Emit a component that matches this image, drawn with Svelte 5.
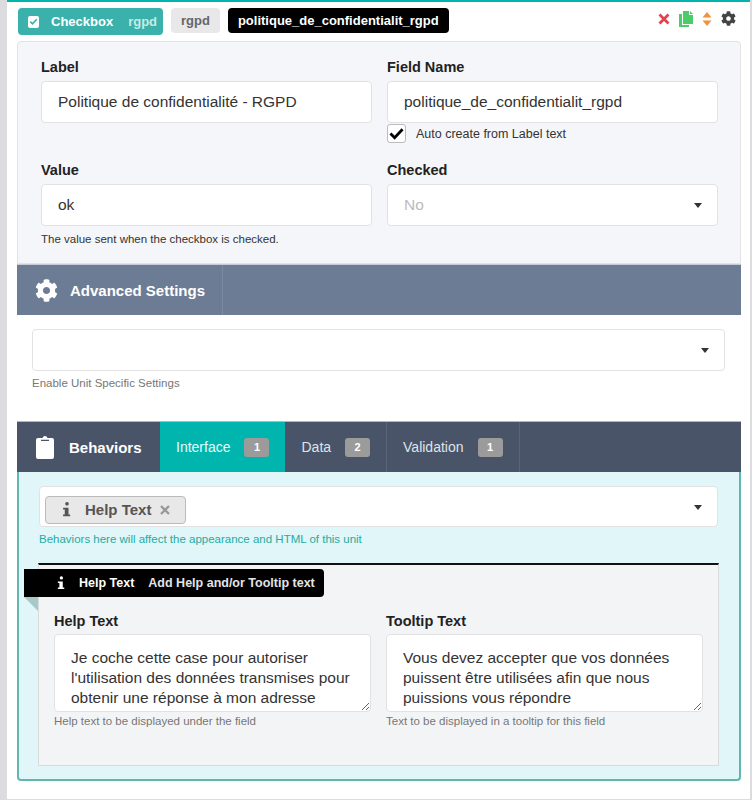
<script>
  const gear = 'M487.4 315.7l-42.6-24.6c4.3-23.2 4.3-47 0-70.2l42.6-24.6c4.9-2.8 7.1-8.6 5.5-14-11.1-35.6-30-67.8-54.7-94.6-3.8-4.1-10-5.1-14.8-2.3L380.8 110c-17.9-15.4-38.5-27.3-60.8-35.1V25.8c0-5.6-3.9-10.5-9.4-11.7-36.7-8.2-74.3-7.8-109.2 0-5.5 1.2-9.4 6.1-9.4 11.7V75c-22.2 7.9-42.8 19.8-60.8 35.1L88.7 85.5c-4.9-2.8-11-1.9-14.8 2.3-24.7 26.7-43.6 58.9-54.7 94.6-1.7 5.4.6 11.2 5.5 14L67.3 221c-4.3 23.2-4.3 47 0 70.2l-42.6 24.6c-4.9 2.8-7.1 8.6-5.5 14 11.1 35.6 30 67.8 54.7 94.6 3.8 4.1 10 5.1 14.8 2.3l42.6-24.6c17.9 15.4 38.5 27.3 60.8 35.1v49.2c0 5.6 3.9 10.5 9.4 11.7 36.7 8.2 74.3 7.8 109.2 0 5.5-1.2 9.4-6.1 9.4-11.7v-49.2c22.2-7.9 42.8-19.8 60.8-35.1l42.6 24.6c4.9 2.8 11 1.9 14.8-2.3 24.7-26.7 43.6-58.9 54.7-94.6 1.5-5.5-.7-11.3-5.6-14.1zM256 336c-44.1 0-80-35.9-80-80s35.9-80 80-80 80 35.9 80 80-35.9 80-80 80z';
  const info = 'M5 2.2a2.2 2.2 0 1 1 4.4 0a2.2 2.2 0 1 1-4.4 0zM2.5 7h6.5v8h2v2H2.500v-2h2V9h-2z';

  const tabs = [
    { name: 'Interface', count: 1, active: true },
    { name: 'Data', count: 2 },
    { name: 'Validation', count: 1 },
  ];

  const helpText = "Je coche cette case pour autoriser l'utilisation des données transmises pour obtenir une réponse à mon adresse";
  const tooltipText = 'Vous devez accepter que vos données puissent être utilisées afin que nous puissions vous répondre';
</script>

<div class="unit">
  <div class="topbar">
    <div class="tags">
      <span class="tag type">
        <span class="tick">
          <svg viewBox="0 0 12 12" width="11" height="11"><path d="M2.500 6.200l2.400 2.400 4.600-5" fill="none" stroke="#3ab1aa" stroke-width="1.800" /></svg>
        </span>
        <b>Checkbox</b>
        <b class="soft">rgpd</b>
      </span>
      <span class="tag grey">rgpd</span>
      <span class="tag black">politique_de_confidentialit_rgpd</span>
    </div>
    <div class="actions">
      <svg viewBox="0 0 12 12" width="12" height="12"><path d="M1.500 1.500l9 9M10.500 1.500l-9 9" stroke="#e0424f" stroke-width="2.800" /></svg>
      <svg viewBox="0 0 14 16" width="14" height="16"><path d="M4 0h6v4h4v9H4z M11 0l3 3h-3z" fill="#4ccb6b" /><path d="M0 3h3v11h7v2H0z" fill="#4ccb6b" /></svg>
      <svg viewBox="0 0 10 14" width="10" height="14"><path d="M5 0l4.500 5.500H.5zM5 14L.5 8.500h9z" fill="#f0923b" /></svg>
      <svg viewBox="0 0 512 512" width="15" height="15"><path d={gear} fill="#444" /></svg>
    </div>
  </div>

  <div class="panel">
    <div class="field">
      <label for="label">Label</label>
      <input id="label" value="Politique de confidentialité - RGPD" />
    </div>
    <div class="field">
      <label for="fname">Field Name</label>
      <input id="fname" value="politique_de_confidentialit_rgpd" />
      <div class="auto">
        <span class="box">
          <svg viewBox="0 0 16 14" width="15" height="13"><path d="M1.500 7l4.500 4.500L14.500 2.500" fill="none" stroke="#000" stroke-width="3" /></svg>
        </span>
        Auto create from Label text
      </div>
    </div>
    <div class="field">
      <label for="val">Value</label>
      <input id="val" value="ok" />
      <p class="hint dark">The value sent when the checkbox is checked.</p>
    </div>
    <div class="field">
      <span class="lbl">Checked</span>
      <div class="select muted">No<i class="caret"></i></div>
    </div>
  </div>

  <div class="bar advanced">
    <div class="bar-title">
      <svg viewBox="0 0 512 512" width="23" height="23"><path d={gear} fill="#fff" /></svg>
      <b>Advanced Settings</b>
    </div>
  </div>
  <div class="adv-body">
    <div class="select"><i class="caret"></i></div>
    <p class="hint">Enable Unit Specific Settings</p>
  </div>

  <div class="bar behaviors">
    <div class="bar-title beh">
      <svg viewBox="0 0 18 24" width="18" height="24">
        <path fill-rule="evenodd" fill="#fff" d="M2 3h4.500a2.600 2.600 0 0 1 5 0H16a2 2 0 0 1 2 2v17a2 2 0 0 1-2 2H2a2 2 0 0 1-2-2V5a2 2 0 0 1 2-2zM5 6h8V4.800H5z" />
      </svg>
      <b>Behaviors</b>
    </div>
    {#each tabs as tab}
      <div class="tab" class:active={tab.active}>
        {tab.name}
        <span class="count">{tab.count}</span>
      </div>
    {/each}
  </div>

  <div class="beh-body">
    <div class="select chooser">
      <span class="chip">
        <svg viewBox="0 0 12 18" width="10" height="15"><path d={info} fill="#555" /></svg>
        <b>Help Text</b>
        <svg class="chip-x" viewBox="0 0 10 10" width="10" height="10"><path d="M1 1l8 8M9 1l-8 8" stroke="#999" stroke-width="2.400" /></svg>
      </span>
      <i class="caret"></i>
    </div>
    <p class="hint teal">Behaviors here will affect the appearance and HTML of this unit</p>

    <div class="help-card">
      <div class="ribbon">
        <svg viewBox="0 0 12 18" width="9" height="14"><path d={info} fill="#fff" /></svg>
        <b>Help Text</b>
        <b class="soft">Add Help and/or Tooltip text</b>
      </div>
      <div class="ribbon-fold"></div>
      <div class="field">
        <label for="help">Help Text</label>
        <textarea id="help" value={helpText}></textarea>
        <p class="hint">Help text to be displayed under the field</p>
      </div>
      <div class="field">
        <label for="tip">Tooltip Text</label>
        <textarea id="tip" value={tooltipText}></textarea>
        <p class="hint">Text to be displayed in a tooltip for this field</p>
      </div>
    </div>
  </div>
</div>

<style>
  :global(body) {
    background: #dcdcde;
    font-family: "Liberation Sans", Arial, sans-serif;
  }

  .unit {
    box-sizing: border-box;
    width: 743px;
    height: 799px;
    margin-left: 7px;
    padding: 0 9px 0 10px;
    background: #fff;
    border-top: 2px solid #00b5ad;
    color: #333;
  }

  .topbar {
    display: flex;
    justify-content: space-between;
    align-items: flex-start;
    padding: 6px 0 0 1px;
    height: 33px;
  }

  .tags {
    display: flex;
    gap: 8px;
    align-items: flex-start;
  }

  .tag {
    display: flex;
    align-items: center;
    height: 25px;
    padding: 0 10px;
    border-radius: 4px;
    font-size: 13px;
    font-weight: bold;
  }

  .type {
    height: 27px;
    width: 145px;
    box-sizing: border-box;
    background: #3ab1aa;
    color: #fff;
  }

  .type .tick {
    display: flex;
    align-items: center;
    justify-content: center;
    width: 12px;
    height: 12px;
    margin-right: 12px;
    background: #fff;
    border-radius: 2px;
  }

  .type .soft {
    margin-left: 15px;
    color: #c4ece9;
  }

  .grey {
    background: #e8e8e8;
    color: #666;
  }

  .black {
    background: #000;
    color: #fff;
  }

  .actions {
    display: flex;
    align-items: center;
    gap: 9px;
    height: 21px;
    padding-right: 5px;
    margin-top: 0;
  }

  .panel {
    display: grid;
    grid-template-columns: 331px 331px;
    column-gap: 15px;
    grid-template-rows: 103px 1fr;
    box-sizing: border-box;
    height: 223px;
    padding: 16px 23px 0;
    background: #f5f6f9;
    border: 1px solid #e3e3e6;
    border-radius: 4px 4px 0 0;
  }

  .field {
    min-width: 0;
  }

  label,
  .lbl {
    display: block;
    height: 23px;
    font-size: 14.500px;
    line-height: 18px;
    font-weight: bold;
    color: #222;
  }

  input,
  .select {
    display: block;
    box-sizing: border-box;
    width: 100%;
    height: 42px;
    padding: 0 16px;
    background: #fff;
    border: 1px solid #e2e2e5;
    border-radius: 4px;
    font: 15.500px/40px "Liberation Sans", Arial, sans-serif;
    color: #333;
    position: relative;
  }

  .muted {
    color: #bbb;
  }

  .caret {
    position: absolute;
    right: 15px;
    top: 18px;
    border: 4.500px solid transparent;
    border-top: 5px solid #333;
    border-bottom: 0;
  }

  .auto {
    display: flex;
    align-items: center;
    gap: 10px;
    margin-top: 1px;
    font-size: 12.500px;
    color: #333;
  }

  .box {
    display: flex;
    align-items: center;
    justify-content: center;
    box-sizing: border-box;
    width: 19px;
    height: 19px;
    background: #fff;
    border: 1px solid #bbb;
    border-radius: 3px;
  }

  .hint {
    margin: 0;
    font-size: 11.500px;
    line-height: 14px;
    color: #777;
  }

  .dark {
    margin-top: 6px;
    color: #333;
  }

  .teal {
    margin-top: 5px;
    color: #27aba3;
  }

  .bar {
    display: flex;
    height: 50px;
    color: #fff;
  }

  .bar-title {
    display: flex;
    align-items: center;
    gap: 12px;
    box-sizing: border-box;
    padding-left: 18px;
    font-size: 15px;
  }

  .advanced {
    background: #6d7c95;
    border-top: 1px solid #c7ccd4;
    box-sizing: content-box;
  }

  .advanced .bar-title {
    width: 206px;
    border-right: 1px solid #7c8aa1;
  }

  .adv-body {
    box-sizing: border-box;
    height: 106px;
    padding: 14px 16px 0 15px;
  }

  .adv-body .hint {
    margin-top: 5px;
  }

  .behaviors {
    height: 51px;
    background: #4a5468;
    border-top: 1px solid #b4b8c0;
    box-sizing: border-box;
  }

  .beh {
    width: 143px;
    gap: 15px;
    padding-left: 19px;
  }

  .tab {
    display: flex;
    align-items: center;
    gap: 14px;
    padding: 0 16px;
    font-size: 14px;
    color: #dfe3ea;
    border-right: 1px solid #59637a;
  }

  .tab.active {
    background: #00b5ad;
    border-right: 0;
    color: #e8fbfa;
  }

  .count {
    display: flex;
    align-items: center;
    justify-content: center;
    width: 25px;
    height: 19px;
    border-radius: 3px;
    background: #9b9b9b;
    color: #fff;
    font-size: 11px;
    font-weight: bold;
  }

  .beh-body {
    box-sizing: border-box;
    height: 309px;
    padding: 14px 20px 0 20px;
    background: #e0f6f8;
    border: 2px solid #62b6b2;
    border-top: 0;
    border-radius: 0 0 4px 4px;
  }

  .chooser {
    height: 41px;
    padding: 5px;
    width: 679px;
  }

  .chip {
    display: inline-flex;
    align-items: center;
    box-sizing: border-box;
    width: 141px;
    height: 28px;
    padding-left: 15px;
    background: #e8e8e8;
    border: 1px solid #bbb;
    border-radius: 4px;
    font-size: 15px;
    line-height: 1;
    color: #555;
  }

  .chip b {
    margin-left: 14px;
  }

  .chip-x {
    margin-left: 9px;
  }

  .help-card {
    position: relative;
    display: grid;
    grid-template-columns: 317px 317px;
    column-gap: 15px;
    box-sizing: border-box;
    width: 681px;
    height: 203px;
    margin: 17px 0 0 -1px;
    padding: 47px 15px 0;
    background: #f3f4f6;
    border: 1px solid #d8dadc;
    border-top: 2px solid #111;
  }

  .help-card label {
    height: 22px;
  }

  .ribbon {
    position: absolute;
    left: -15px;
    top: 4px;
    display: flex;
    align-items: center;
    box-sizing: border-box;
    width: 300px;
    height: 28px;
    padding-left: 32px;
    background: #000;
    border-radius: 0 4px 4px 0;
    color: #fff;
    font-size: 12.500px;
    gap: 14px;
  }

  .ribbon .soft {
    color: #e4e4e4;
    margin-left: 0;
  }

  .ribbon-fold {
    position: absolute;
    left: -15px;
    top: 32px;
    border-top: 14px solid #a8c9ca;
    border-left: 14px solid transparent;
  }

  textarea {
    display: block;
    box-sizing: border-box;
    width: 100%;
    height: 78px;
    padding: 13px 16px 0;
    background: #fff;
    border: 1px solid #e2e2e5;
    border-radius: 4px;
    font: 15.500px/20px "Liberation Sans", Arial, sans-serif;
    color: #333;
    overflow: hidden;
  }

  textarea + .hint {
    margin-top: 2px;
  }
</style>
